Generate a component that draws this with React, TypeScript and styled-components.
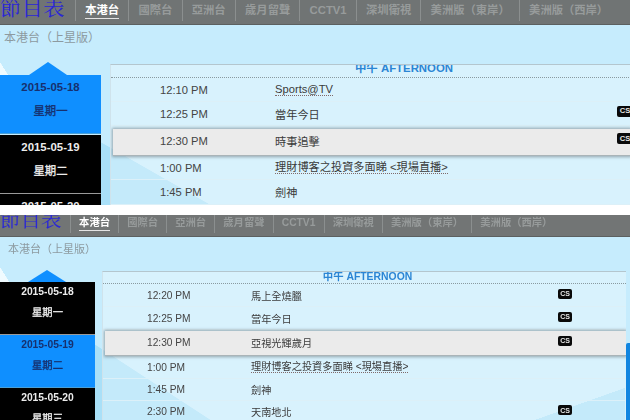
import React from "react";
import styled, { createGlobalStyle } from "styled-components";

const Global = createGlobalStyle`
  html, body { margin: 0; padding: 0; background: #fff; }
  #root { width: 630px; height: 420px; overflow: hidden; }
`;

const FONT = `"Liberation Sans", "Noto Sans CJK TC", sans-serif`;

type V = { $b?: boolean };

const Page = styled.div`
  display: flex;
  flex-direction: column;
  gap: 10px;
  width: 630px;
  height: 420px;
  overflow: hidden;
  filter: blur(0.5px);
  font-family: ${FONT};
`;

const Panel = styled.section<V>`
  position: relative;
  display: flex;
  flex-direction: column;
  height: 205px;
  flex: none;
  overflow: hidden;
  background-color: #c6ecfd;
  background-repeat: no-repeat;
  background-image: ${(p) =>
    p.$b
      ? `linear-gradient(to top right, #a9e0f8 50%, transparent 50.3%),
         linear-gradient(to top left, #a9e0f8 50%, transparent 50.3%),
         linear-gradient(to bottom left, transparent 50%, #f0fbff 50.5%)`
      : `linear-gradient(to top right, #a9e0f8 50%, transparent 50.3%),
         linear-gradient(to bottom left, transparent 50%, #f0fbff 50.5%)`};
  background-size: ${(p) =>
    p.$b ? "210px 137px, 90px 32px, 10px 16px" : "210px 120px, 10px 16px"};
  background-position: ${(p) =>
    p.$b ? "left bottom, 535px bottom, left 52px" : "left bottom, left 62px"};
`;

const Header = styled.header<V>`
  display: flex;
  align-items: flex-start;
  height: ${(p) => (p.$b ? 22 : 25)}px;
  flex: none;
  background: ${(p) => (p.$b ? "#727575" : "#707474")};
  box-shadow: inset 0 -1px 0 #5c6060;
  overflow: hidden;
`;

const Title = styled.h1<V>`
  margin: 0;
  width: ${(p) => (p.$b ? 70 : 75)}px;
  flex: none;
  font: 400 ${(p) => (p.$b ? 20.5 : 21.5)}px/1 "Liberation Serif", "Noto Serif CJK TC", "Noto Sans CJK TC", serif;
  color: #2a27d6;
  white-space: nowrap;
  margin-top: ${(p) => (p.$b ? -5 : -2)}px;
`;

const Tabs = styled.nav<V>`
  display: flex;
  height: ${(p) => (p.$b ? 18 : 21)}px;
  border-left: 1px solid #8b8f8f;
`;

const Tab = styled.a<V & { $on?: boolean }>`
  display: flex;
  align-items: center;
  padding: 0 ${(p) => (p.$b ? 8.1 : 9.2)}px ${(p) => (p.$b ? 3 : 0)}px;
  border-right: 1px solid #8b8f8f;
  font-size: ${(p) => (p.$b ? 10.3 : 11.3)}px;
  font-weight: 700;
  color: ${(p) => (p.$on ? "#fff" : "#979b9b")};
  white-space: nowrap;
  span {
    border-bottom: ${(p) => (p.$on ? "1.5px solid #e4e4e4" : "1.5px solid transparent")};
    line-height: 15px;
  }
  &:last-child { border-right: none; }
`;

const SubTitle = styled.h2<V>`
  margin: 0;
  height: ${(p) => (p.$b ? 33 : 38)}px;
  flex: none;
  padding: ${(p) => (p.$b ? "4px 0 0 8px" : "5px 0 0 4px")};
  box-sizing: border-box;
  font-size: ${(p) => (p.$b ? 11 : 12)}px;
  line-height: 16px;
  font-weight: 400;
  color: #8d9aa0;
`;

const Body = styled.div`
  display: flex;
  align-items: flex-start;
  flex: 1;
  min-height: 0;
`;

const Side = styled.aside<V>`
  width: ${(p) => (p.$b ? 95 : 101)}px;
  flex: none;
  display: flex;
  flex-direction: column;
  align-items: stretch;
`;

const Arrow = styled.div<V>`
  width: 0;
  height: 0;
  margin-left: ${(p) => (p.$b ? 28 : 29)}px;
  border-left: 19px solid transparent;
  border-right: 19px solid transparent;
  border-bottom: ${(p) => (p.$b ? 12 : 13)}px solid #0f8fff;
  margin-top: ${(p) => (p.$b ? 0 : -1)}px;
`;

const Day = styled.div<V & { $on?: boolean }>`
  height: ${(p) => (p.$b ? 53 : 59)}px;
  flex: none;
  box-sizing: border-box;
  padding-top: ${(p) => (p.$b ? 4 : 6)}px;
  text-align: center;
  font-weight: 700;
  font-size: ${(p) => (p.$b ? 10.3 : 11.4)}px;
  background: ${(p) => (p.$on ? "#0f8fff" : "#000")};
  color: ${(p) => (p.$on ? "#17306e" : "#ececec")};
  border-bottom: 1px solid ${(p) => (p.$on ? "#4aa0d8" : "#9a9a9a")};
  div { line-height: ${(p) => (p.$b ? 12 : 13)}px; }
  div + div { margin-top: ${(p) => (p.$b ? 9 : 11)}px; font-weight: 400; -webkit-text-stroke: 0.3px currentColor; }
`;

const DayGap = styled.div`
  height: 1px;
  flex: none;
  background: #c6ecfd;
`;

const Table = styled.div<V>`
  flex: none;
  width: ${(p) => (p.$b ? 523 : 520)}px;
  margin-left: ${(p) => (p.$b ? 7 : 9)}px;
  margin-top: 1px;
  border-top: 1px solid #b4c6ce;
  border-left: 1px solid #cfe3ec;
  background: rgba(255, 255, 255, 0.32);
  overflow: hidden;
`;

const Heading = styled.div<V>`
  height: ${(p) => (p.$b ? 11 : 12)}px;
  line-height: ${(p) => (p.$b ? 10 : 6)}px;
  border-bottom: 1px dotted #8a9aa0;
  text-align: center;
  font-size: ${(p) => (p.$b ? 10.4 : 11.4)}px;
  font-weight: 700;
  color: #2b85d4;
  overflow: hidden;
  padding-left: ${(p) => (p.$b ? 6 : 66)}px;
`;

const Row = styled.div<V & { $hi?: boolean; $h: number }>`
  display: grid;
  grid-template-columns: ${(p) => {
    const first = (p.$b ? 44 : 49) - (p.$hi ? 2 : 0);
    return p.$b ? `${first}px 104px 307px 1fr` : `${first}px 115px 342px 1fr`;
  }};
  align-items: center;
  box-sizing: border-box;
  height: ${(p) => p.$h}px;
  font-size: ${(p) => (p.$b ? 10.2 : 11.2)}px;
  color: #444;
  border-bottom: 1px solid ${(p) => (p.$hi ? "#aab4b8" : "#dcf0f8")};
  ${(p) =>
    p.$hi
      ? `background:#ebebeb; margin: ${p.$b ? 1 : 3}px 0 0 2px; box-shadow: 0 0 3px 1px rgba(90,100,105,.55);
         position: relative; padding-bottom: 2px;`
      : ""}
`;

const Time = styled.span`
  grid-column: 2;
`;

const Name = styled.span<{ $link?: boolean }>`
  grid-column: 3;
  white-space: nowrap;
  color: #3a3a3a;
  justify-self: start;
  ${(p) => (p.$link ? "border-bottom: 1px dotted #806a6a; line-height: 1.1;" : "")}
`;

const CS = styled.b<V>`
  grid-column: 4;
  justify-self: start;
  display: inline-flex;
  align-items: center;
  justify-content: center;
  width: ${(p) => (p.$b ? 14 : 16)}px;
  height: ${(p) => (p.$b ? 10 : 11)}px;
  margin-bottom: ${(p) => (p.$b ? 3 : 5)}px;
  border-radius: 2px;
  background: #0a0a0a;
  color: #e6e6e6;
  font-size: ${(p) => (p.$b ? 7 : 7.6)}px;
  line-height: 1;
`;

const EdgeBar = styled.div`
  position: absolute;
  right: 0;
  bottom: 0;
  width: 4px;
  height: 77px;
  background: #1185e0;
  border-radius: 2px 0 0 0;
`;

const tabs = ["本港台", "國際台", "亞洲台", "歲月留聲", "CCTV1", "深圳衛視", "美洲版（東岸）", "美洲版（西岸）"];

type P = { t: string; n: string; cs?: boolean; link?: boolean; hi?: boolean; h: number };

const rowsA: P[] = [
  { t: "12:10 PM", n: "Sports@TV", link: true, h: 24 },
  { t: "12:25 PM", n: "當年今日", cs: true, h: 24 },
  { t: "12:30 PM", n: "時事追擊", cs: true, hi: true, h: 27 },
  { t: "1:00 PM", n: "理財博客之投資多面睇 <現場直播>", link: true, h: 24 },
  { t: "1:45 PM", n: "劍神", h: 25 },
];

const rowsB: P[] = [
  { t: "12:20 PM", n: "馬上全燒臘", cs: true, h: 23 },
  { t: "12:25 PM", n: "當年今日", cs: true, h: 23 },
  { t: "12:30 PM", n: "亞視光輝歲月", cs: true, hi: true, h: 25 },
  { t: "1:00 PM", n: "理財博客之投資多面睇 <現場直播>", link: true, h: 23 },
  { t: "1:45 PM", n: "劍神", h: 22 },
  { t: "2:30 PM", n: "天南地北", cs: true, h: 22 },
];

const days = [
  { d: "2015-05-18", w: "星期一" },
  { d: "2015-05-19", w: "星期二" },
  { d: "2015-05-20", w: "星期三" },
];

function Schedule({ b, rows, active }: { b?: boolean; rows: P[]; active: number }) {
  return (
    <Panel $b={b}>
      <Header $b={b}>
        <Title $b={b}>節目表</Title>
        <Tabs $b={b}>
          {tabs.map((t, i) => (
            <Tab key={t} $b={b} $on={i === 0}>
              <span>{t}</span>
            </Tab>
          ))}
        </Tabs>
      </Header>
      <SubTitle $b={b}>本港台（上星版）</SubTitle>
      <Body>
        <Side $b={b}>
          <Arrow $b={b} />
          {days.map((x, i) => (
            <React.Fragment key={x.d}>
              <Day $b={b} $on={i === active}>
                <div>{x.d}</div>
                <div>{x.w}</div>
              </Day>
              {!b && i === 0 && <DayGap />}
            </React.Fragment>
          ))}
        </Side>
        <Table $b={b}>
          <Heading $b={b}>中午 AFTERNOON</Heading>
          {rows.map((r) => (
            <Row key={r.t} $b={b} $hi={r.hi} $h={r.h}>
              <Time>{r.t}</Time>
              <Name $link={r.link}>{r.n}</Name>
              {r.cs && <CS $b={b}>CS</CS>}
            </Row>
          ))}
        </Table>
      </Body>
      {b && <EdgeBar />}
    </Panel>
  );
}

export default function App() {
  return (
    <>
      <Global />
      <Page>
        <Schedule rows={rowsA} active={0} />
        <Schedule b rows={rowsB} active={1} />
      </Page>
    </>
  );
}
